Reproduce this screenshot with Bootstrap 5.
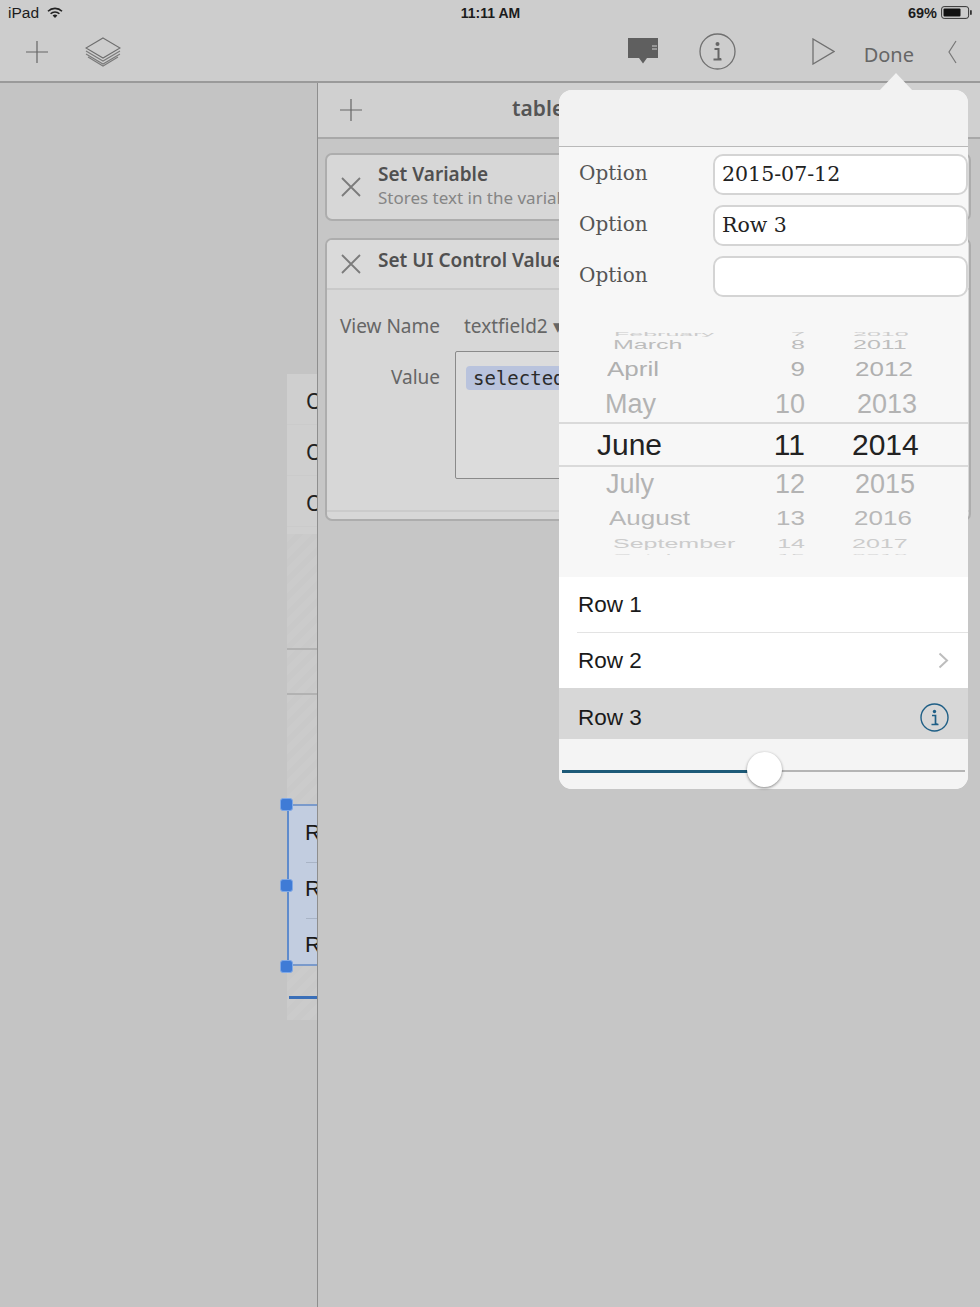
<!DOCTYPE html>
<html lang="en">
<head>
<meta charset="utf-8">
<title>Editor</title>
<link href="https://cdn.jsdelivr.net/npm/bootstrap@5.3.0/dist/css/bootstrap.min.css" rel="stylesheet">
<style>
html,body{height:1307px;overflow:hidden;background:#c4c4c4}
body{font-family:"Liberation Sans",Arial,sans-serif;position:relative;color:#222}
.topbar{height:83px;background:#cdcdcd;border-bottom:2px solid #9a9a9a}
.statusrow{height:22px;padding:3px 7px 0 8px;font-size:15.5px;line-height:22px;color:#1c1c1c}
.statusrow>div{flex:1 1 0}
.stat-mid{font-weight:700;font-size:14px;text-align:center}
.stat-pct{font-size:14.5px}
.toolrow{height:59px;padding:0 23px 0 25px}
.tool-done{font-family:"Noto Sans",sans-serif;font-size:20px;color:#666;margin:6px 33px 0 29px;line-height:1}
.ic-layers{margin-left:36px}
.ic-info{margin-left:40px}
.ic-play{margin-left:76px}
.main-area{height:1224px}
.canvas-zone{width:317px;position:relative;background:#c4c4c4;flex:none}
.panel-zone{flex:1 1 auto;min-width:0;border-left:1px solid #8e8e8e;background:#c6c6c6;overflow:hidden}
.panel-head{height:56px;background:#d0d0d0;border-bottom:2px solid #a8a8a8;padding-left:21px}
.panel-title{font-family:"Noto Sans",sans-serif;font-weight:600;font-size:21px;color:#555;margin-left:149px;margin-top:-3px}
.act-card{font-family:"Noto Sans",sans-serif;margin:0 -1px 17px 7px;width:646px;background:#d7d7d7;border:2px solid #adadad;border-radius:7px;color:#555}
.stack-cards{padding-top:14px}
.card-top{padding:0 0 0 14px}
.first-card{height:68px}
.second-card{height:283px}
.act-text{margin-left:17px;margin-top:-2px}
.ttl{font-family:"Noto Sans",sans-serif;font-weight:600;font-size:19px;line-height:24px;color:#505050;white-space:nowrap}
.ttl-b{margin-left:17px;margin-top:-8px}
.subt{font-size:17px;line-height:24px;color:#858585;white-space:nowrap}
.head-line{height:50px;border-bottom:2px solid #c9c9c9;padding-left:14px;background:#dadada;border-radius:5px 5px 0 0}
.lbl{width:114px;padding-right:1px;text-align:right;font-size:19px;color:#666;flex:none}
.val{font-size:19px;color:#666;margin-left:23px;white-space:nowrap}
.field-row{margin-top:21px;height:30px}
.value-row{margin-top:10px}
.lbl-b{margin-top:12px}
.val-box{margin-left:14px;width:300px;height:128px;border:1px solid #8a8a8a;background:#dcdcdc;border-radius:2px;padding:14px 0 0 10px}
.chip{display:inline-block;background:#b9c3dd;border-radius:4px;font-family:"DejaVu Sans Mono",monospace;font-size:19px;line-height:24px;padding:0 7px;color:#2b2b2b}
.card-foot{margin-top:31px;border-top:2px solid #cbcbcb;height:10px}
.stage-col{position:absolute;left:287px;top:291px;width:30px;overflow:hidden;font-size:21px;color:#222}
.o-rows{height:160px;background:#cfcfcf;font-family:"Noto Sans",sans-serif}
.o-rows>div{height:51px;line-height:54px;padding-left:19px;white-space:nowrap;border-bottom:1px solid #cbcbcb}
.hatch{background:repeating-linear-gradient(135deg,#cbcbcb 0 6px,#c9c9c9 6px 12px)}
.hatch-a{height:116px;border-bottom:2px solid #b2b2b2}
.hatch-b{height:45px;border-bottom:2px solid #b2b2b2}
.hatch-c{height:109px}
.sel-rows{height:162px;background:#c2cde0;border-top:2px solid #7a9acb;border-bottom:2px solid #7a9acb;border-left:2px solid #5f8bcc;font-size:22px;color:#1a1a1a}
.sel-rows>div{height:56px;line-height:54px;padding-left:16px;white-space:nowrap;overflow:hidden;position:relative}
.sel-rows>div+div:before{content:"";position:absolute;left:17px;right:0;top:0;border-top:1px solid #a9b4c6}
.hatch-d{height:54px;padding-top:30px}
.slider-mark{margin-left:2px;height:3px;background:#3a6fb8}
.grip{position:absolute;left:280px;width:13px;height:13px;background:#3f7bd6;border:1px solid #7fa8e6;border-radius:3px}
.grip-a{top:715px}
.grip-b{top:796px}
.grip-c{top:877px}
.pop-box{position:absolute;left:559px;top:90px;width:409px;height:699px;background:#f7f7f7;border-radius:13px;z-index:5}
.pop-arrow{position:absolute;left:879px;top:73px;width:0;height:0;border-left:17px solid transparent;border-right:17px solid transparent;border-bottom:18px solid #f2f2f2;z-index:5}
.pop-head{height:57px;background:#f2f2f2;border-bottom:1px solid #b9b9b9;border-radius:13px 13px 0 0}
.opt-area{padding-top:7px}
.opt-row{height:41px;margin-bottom:10px}
.opt-lbl{font-family:"DejaVu Serif",serif;font-size:20px;color:#555;width:154px;padding-left:20px;flex:none;margin-top:-2px}
.opt-input.form-control{width:255px;height:41px;padding:0 7px;line-height:36px;border:2px solid #d4d4d4;border-radius:10px;font-family:"DejaVu Serif",serif;font-size:20.5px;color:#222;background:#fff}
.wheel{height:226px;margin-top:23px;overflow:hidden;position:relative}
.wh-row{display:flex;white-space:nowrap;position:relative}
.wh-row>span{display:block}
.c-m{width:190px;flex:none}
.c-d{width:56px;flex:none;text-align:right}
.c-y{flex:none}
.w0{height:7px;line-height:7px;font-size:25px;color:#ccc;transform:scaleY(.25)}
.w1{height:14px;line-height:14px;font-size:25px;color:#bdbdbd;transform:scaleY(.5)}
.w2{height:36px;line-height:36px;font-size:26px;color:#b0b0b0;transform:scaleY(.78)}
.w3{height:35px;line-height:35px;font-size:27px;color:#b3b3b3}
.w4{height:45px;line-height:41px;font-size:30px;color:#222;border-top:2px solid #dadada;border-bottom:2px solid #dadada}
.w5{height:35px;line-height:35px;font-size:27px;color:#b3b3b3}
.w6{height:32px;line-height:32px;font-size:26px;color:#b8b8b8;transform:scaleY(.78)}
.w7{height:18px;line-height:18px;font-size:25px;color:#ccc;transform:scaleY(.5)}
.w8{height:8px;line-height:8px;font-size:25px;color:#d4d4d4;transform:scaleY(.25)}
.m0{padding-left:55px}.m1{padding-left:54px}.m2{padding-left:48px}.m3{padding-left:46px}.m4{padding-left:38px}.m5{padding-left:47px}.m6{padding-left:50px}.m7{padding-left:54px}
.y1{margin-left:48px}.y2{margin-left:50px}.y3{margin-left:52px}.y4{margin-left:47px}.y5{margin-left:50px}.y6{margin-left:49px}.y7{margin-left:47px}
.gap-wheel{height:22px}
.row-list{border-radius:0;--bs-list-group-border-width:0}
.row-item.list-group-item{height:56px;padding:0 19px;background:#fff;color:#1a1a1a;font-size:22.500px;display:flex;align-items:center;justify-content:space-between;position:relative;border:0}
.row-item.list-group-item.with-line:after{content:"";position:absolute;left:18px;right:0;bottom:0;border-bottom:1px solid #e3e3e3}
.row-item.list-group-item.row-mid{height:55px}
.row-item.list-group-item.row-hot{height:51px;background:#d7d7d7;padding-top:8px}
.slide-zone{height:50px;background:#f4f4f4;position:relative;border-radius:0 0 13px 13px}
.track-on{position:absolute;left:3px;top:30.500px;width:190px;height:3px;background:#1d5a78}
.track-off{position:absolute;left:190px;right:3px;top:31px;height:2px;background:#b5b5b5}
.thumb{position:absolute;left:188px;top:13px;width:35px;height:35px;border-radius:50%;background:#fff;box-shadow:0 1px 3px rgba(0,0,0,.45)}
svg{display:block;flex:none}
</style>
</head>
<body>
<header class="topbar">
  <div class="statusrow d-flex align-items-center">
    <div class="d-flex align-items-center gap-2">
      <span>iPad</span>
      <svg width="16" height="12" viewBox="0 0 16 12"><path d="M1 4.200a10 10 0 0 1 14 0" fill="none" stroke="#222" stroke-width="1.600"/><path d="M3.600 6.800a6.300 6.300 0 0 1 8.800 0" fill="none" stroke="#222" stroke-width="1.600"/><path d="M8 11 5.600 8.600a3.400 3.400 0 0 1 4.800 0z" fill="#222"/></svg>
    </div>
    <div class="stat-mid">11:11 AM</div>
    <div class="d-flex align-items-center justify-content-end gap-1">
      <span class="fw-bold stat-pct">69%</span>
      <svg width="32" height="13" viewBox="0 0 32 13"><rect x=".6" y=".6" width="27" height="11.800" rx="2.500" fill="none" stroke="#333" stroke-width="1"/><rect x="2.500" y="2.500" width="17" height="8" rx="1" fill="#111"/><rect x="29" y="4" width="1.800" height="5" rx=".9" fill="#333"/></svg>
    </div>
  </div>
  <div class="toolrow d-flex align-items-center">
    <svg width="24" height="24" viewBox="0 0 24 24"><path d="M12 1v22M1 12h22" stroke="#666" stroke-width="1.200"/></svg>
    <svg class="ic-layers" width="36" height="30" viewBox="0 0 36 30"><path d="M18 1 35 11 18 21 1 11z" fill="none" stroke="#6e6e6e" stroke-width="1.100"/><path d="M1 14 18 24 35 14M1 17 18 27 35 17M3 20 18 29 33 20" fill="none" stroke="#7a7a7a" stroke-width="1.100"/></svg>
    <div class="ms-auto d-flex align-items-center">
      <svg width="32" height="27" viewBox="0 0 32 27"><path d="M1 0h30v20H20l-4 5.500L12 20H1z" fill="#5f5f5f"/><path d="M25 8h5M25 11h5" stroke="#cfcfcf" stroke-width="1.200"/></svg>
      <svg class="ic-info" width="37" height="37" viewBox="0 0 37 37"><circle cx="18.500" cy="18.500" r="17.500" fill="none" stroke="#707070" stroke-width="1.300"/><circle cx="18.500" cy="11" r="2" fill="#666"/><path d="M15.500 16h4v10h2.500M14.500 26.500h8" fill="none" stroke="#666" stroke-width="2"/></svg>
      <svg class="ic-play" width="23" height="27" viewBox="0 0 23 27"><path d="M1 1v25l21-12.500z" fill="none" stroke="#707070" stroke-width="1.300"/></svg>
      <span class="tool-done">Done</span>
      <svg width="10" height="24" viewBox="0 0 10 24"><path d="M9 1 2 12l7 11" fill="none" stroke="#777" stroke-width="1.200"/></svg>
    </div>
  </div>
</header>

<main class="main-area d-flex">
  <section class="canvas-zone">
    <div class="stage-col">
      <div class="o-rows"><div>Option</div><div>Option</div><div>Option</div></div>
      <div class="hatch hatch-a"></div>
      <div class="hatch hatch-b"></div>
      <div class="hatch hatch-c"></div>
      <div class="sel-rows"><div>Row 1</div><div>Row 2</div><div>Row 3</div></div>
      <div class="hatch hatch-d"><div class="slider-mark"></div></div>
    </div>
    <span class="grip grip-a"></span><span class="grip grip-b"></span><span class="grip grip-c"></span>
  </section>
  <section class="panel-zone">
    <div class="panel-head d-flex align-items-center">
      <svg width="24" height="24" viewBox="0 0 24 24"><path d="M12 1v22M1 12h22" stroke="#666" stroke-width="1.200"/></svg>
      <div class="panel-title">table</div>
    </div>
    <div class="stack-cards">
      <div class="act-card first-card d-flex align-items-center card-top">
        <svg width="20" height="20" viewBox="0 0 20 20"><path d="M1 1l18 18M19 1 1 19" stroke="#7b7b7b" stroke-width="1.800"/></svg>
        <div class="act-text">
          <div class="ttl">Set Variable</div>
          <div class="subt">Stores text in the variable</div>
        </div>
      </div>
      <div class="act-card second-card">
        <div class="head-line d-flex align-items-center">
          <svg width="20" height="20" viewBox="0 0 20 20"><path d="M1 1l18 18M19 1 1 19" stroke="#7b7b7b" stroke-width="1.800"/></svg>
          <div class="ttl ttl-b">Set UI Control Value</div>
        </div>
        <div class="field-row d-flex align-items-center">
          <div class="lbl">View Name</div><div class="val">textfield2 ▾</div>
        </div>
        <div class="value-row d-flex align-items-start">
          <div class="lbl lbl-b">Value</div>
          <div class="val-box"><span class="chip">selected</span></div>
        </div>
        <div class="card-foot"></div>
      </div>
    </div>
  </section>
</main>

<div class="pop-arrow"></div>
<aside class="pop-box d-flex flex-column">
  <div class="pop-head"></div>
  <div class="opt-area">
    <div class="opt-row d-flex align-items-center"><div class="opt-lbl">Option</div><div class="form-control opt-input">2015-07-12</div></div>
    <div class="opt-row d-flex align-items-center"><div class="opt-lbl">Option</div><div class="form-control opt-input">Row 3</div></div>
    <div class="opt-row d-flex align-items-center"><div class="opt-lbl">Option</div><div class="form-control opt-input"></div></div>
  </div>
  <div class="wheel">
    <div class="wh-row w0"><span class="c-m m0">February</span><span class="c-d">7</span><span class="c-y y1">2010</span></div>
    <div class="wh-row w1"><span class="c-m m1">March</span><span class="c-d">8</span><span class="c-y y1">2011</span></div>
    <div class="wh-row w2"><span class="c-m m2">April</span><span class="c-d">9</span><span class="c-y y2">2012</span></div>
    <div class="wh-row w3"><span class="c-m m3">May</span><span class="c-d">10</span><span class="c-y y3">2013</span></div>
    <div class="wh-row w4"><span class="c-m m4">June</span><span class="c-d">11</span><span class="c-y y4">2014</span></div>
    <div class="wh-row w5"><span class="c-m m5">July</span><span class="c-d">12</span><span class="c-y y5">2015</span></div>
    <div class="wh-row w6"><span class="c-m m6">August</span><span class="c-d">13</span><span class="c-y y6">2016</span></div>
    <div class="wh-row w7"><span class="c-m m7">September</span><span class="c-d">14</span><span class="c-y y7">2017</span></div>
    <div class="wh-row w8"><span class="c-m m7">October</span><span class="c-d">15</span><span class="c-y y7">2018</span></div>
  </div>
  <div class="gap-wheel"></div>
  <div class="list-group row-list">
    <div class="list-group-item row-item with-line">Row 1</div>
    <div class="list-group-item row-item row-mid">Row 2
      <svg width="11" height="17" viewBox="0 0 11 17"><path d="M1.500 1.500 9 8.500l-7.500 7" fill="none" stroke="#bdbdbd" stroke-width="2"/></svg>
    </div>
    <div class="list-group-item row-item row-hot">Row 3
      <svg width="29" height="29" viewBox="0 0 29 29"><circle cx="14.500" cy="14.500" r="13.500" fill="none" stroke="#1f5f86" stroke-width="1.400"/><circle cx="14.500" cy="8.500" r="1.700" fill="#1f5f86"/><path d="M12 12.500h3.500v8.500h2M11.500 21.500h7" fill="none" stroke="#1f5f86" stroke-width="1.700"/></svg>
    </div>
  </div>
  <div class="slide-zone">
    <div class="track-off"></div><div class="track-on"></div><div class="thumb"></div>
  </div>
</aside>
<script src="https://cdn.jsdelivr.net/npm/bootstrap@5.3.0/dist/js/bootstrap.bundle.min.js"></script>
</body>
</html>
